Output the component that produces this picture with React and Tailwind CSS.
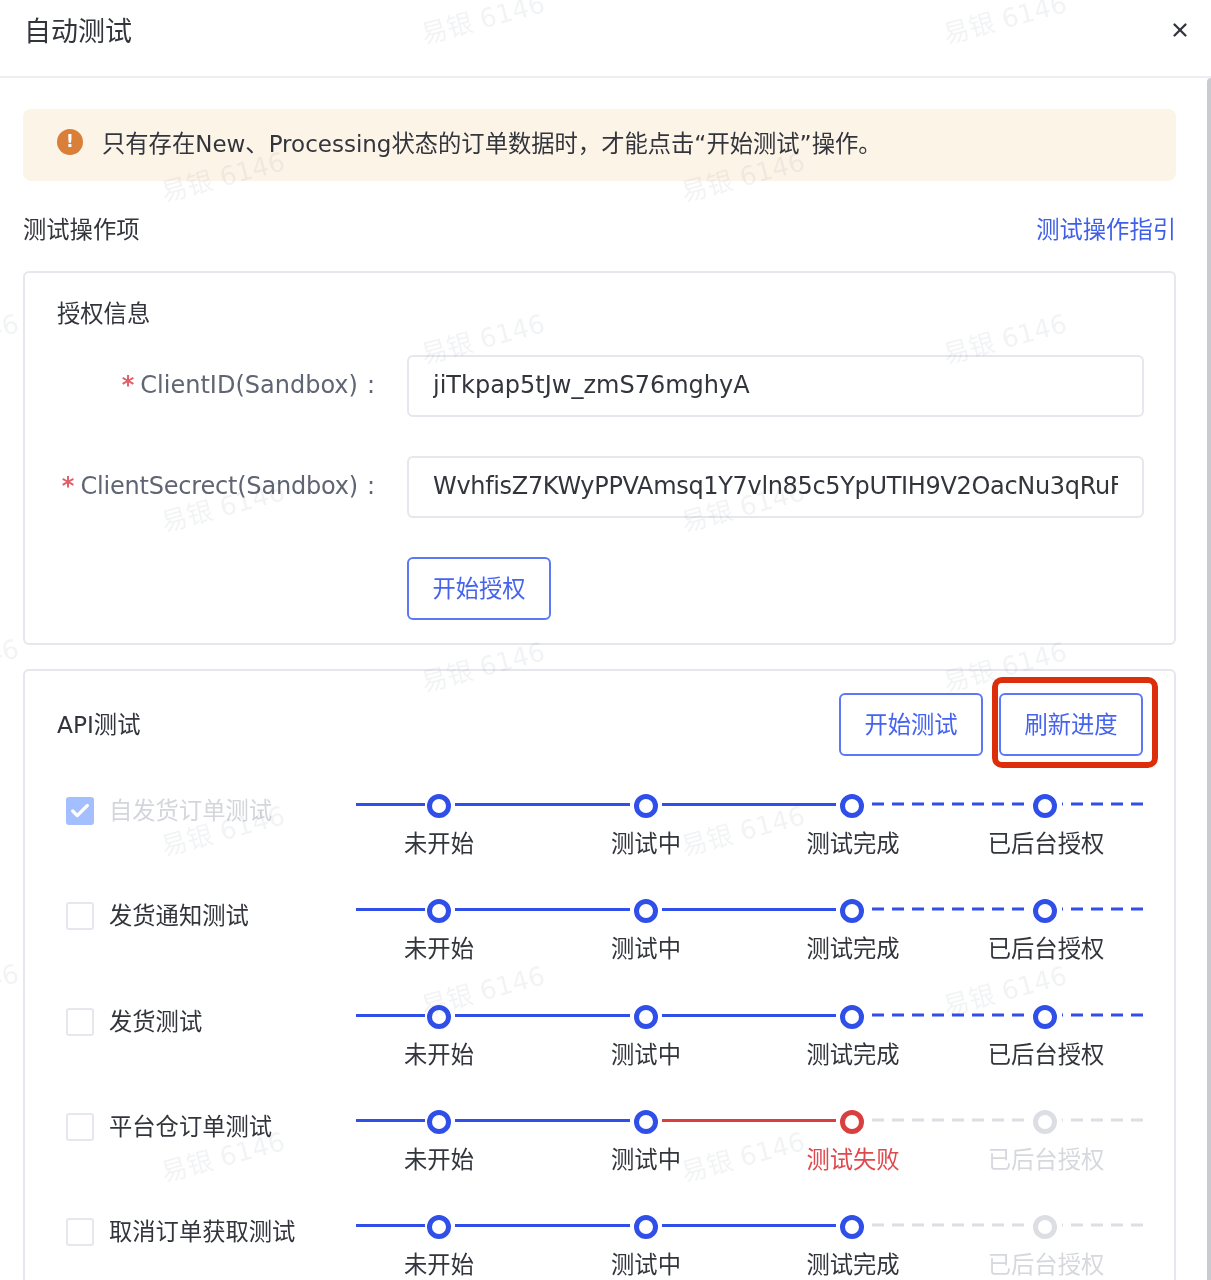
import { X, Check } from "lucide-react";

const font = { fontFamily: '"DejaVu Sans", "Noto Sans CJK SC", sans-serif' };

const watermarks = [
  [420, 0], [942, 0], [160, 158], [680, 158],
  [420, 320], [942, 320], [-106, 320], [160, 488], [680, 488], [-106, 645],
  [420, 648], [942, 648], [160, 812], [680, 812],
  [-106, 970], [420, 972], [942, 972], [160, 1138], [680, 1138],
];

const rows = [
  { name: "自发货订单测试", checked: true, status: "done", dash: "blue" },
  { name: "发货通知测试", status: "done", dash: "blue" },
  { name: "发货测试", status: "done", dash: "blue" },
  { name: "平台仓订单测试", status: "fail", dash: "gray" },
  { name: "取消订单获取测试", status: "done", dash: "gray" },
];

function Dot({ color }) {
  return <span className={`block w-[24px] h-[24px] rounded-full border-[5px] shrink-0 mt-[2px] ${color}`} />;
}

function Dash({ w, color, offset = 0 }) {
  return (
    <svg width={w} height="4" className="shrink-0 block">
      <line x1="0" y1="2" x2={w} y2="2" stroke={color} strokeWidth="3" strokeDasharray="12 8" strokeDashoffset={offset} />
    </svg>
  );
}

function Stepper({ status, dash }) {
  const fail = status === "fail";
  const grey = dash === "gray";
  const dashColor = grey ? "#dcdee3" : "#2f4fe8";
  return (
    <div className="w-[787px]">
      <div className="flex items-start h-[25px] [&>i]:mt-[11px] [&>i]:h-[3px] [&>i]:block">
        <i className="w-[69px] bg-[#2f4fe8]" />
        <span className="w-[2px]" />
        <Dot color="border-[#2f4fe8]" />
        <span className="w-[4px]" />
        <i className="w-[175px] bg-[#2f4fe8]" />
        <span className="w-[4px]" />
        <Dot color="border-[#2f4fe8]" />
        <span className="w-[4px]" />
        <i className={`w-[174px] ${fail ? "bg-[#d93f3f]" : "bg-[#2f4fe8]"}`} />
        <span className="w-[4px]" />
        <Dot color={fail ? "border-[#d93f3f]" : "border-[#2f4fe8]"} />
        <span className="w-[8px]" />
        <span className="mt-[10px]"><Dash w={153} color={dashColor} /></span>
        <span className="w-[8px]" />
        <Dot color={grey ? "border-[#dcdee3]" : "border-[#2f4fe8]"} />
        <span className="w-[5px]" />
        <span className="mt-[10px]"><Dash w={81} color={dashColor} offset={11} /></span>
      </div>
      <div className="flex text-[23.3px] leading-[32px] mt-[11px] text-[#33353d]">
        <span className="w-[100px] ml-[33px] text-center whitespace-nowrap">未开始</span>
        <span className="w-[100px] ml-[107px] text-center whitespace-nowrap">测试中</span>
        <span className={`w-[100px] ml-[107px] text-center whitespace-nowrap ${fail ? "text-[#e0484d]" : ""}`}>
          {fail ? "测试失败" : "测试完成"}
        </span>
        <span className={`w-[100px] ml-[93px] flex justify-center whitespace-nowrap ${grey ? "text-[#d6d8de]" : ""}`}>
          已后台授权
        </span>
      </div>
    </div>
  );
}

function TestRow({ name, checked, status, dash }) {
  return (
    <div className="flex items-start h-[105.3px]">
      <div className="w-[290px] flex items-center pl-[9px] h-[30px] mt-[-1px] shrink-0">
        {checked ? (
          <span className="w-[28px] h-[28px] rounded-[3px] bg-[#a3bfff] flex items-center justify-center">
            <Check size={22} strokeWidth={3.5} className="text-white" />
          </span>
        ) : (
          <span className="w-[28px] h-[28px] rounded-[3px] border-2 border-[#e6e7ec] bg-white" />
        )}
        <span className={`ml-[15px] text-[23.3px] leading-[30px] whitespace-nowrap ${checked ? "text-[#d4d6dc]" : "text-[#33353d]"}`}>{name}</span>
      </div>
      <div className="ml-[9px] mt-[-5px]">
        <Stepper status={status} dash={dash} />
      </div>
    </div>
  );
}

function Field({ label, value, tight }) {
  return (
    <div className="flex items-center h-[62px]">
      <div className="w-[350px] shrink-0 flex justify-end pr-[32px] mb-[2px] text-[24px] text-[#5f6573] whitespace-nowrap">
        <span className="text-[#e0606a] mr-[6px] font-bold">*</span>
        <span className={tight ? "tracking-[-0.2px]" : ""}>{label}</span>
        <span className="ml-[9px]">:</span>
      </div>
      <div className="w-[737px] h-[62px] border-2 border-[#e6e7ec] rounded-[6px] px-[24px] flex items-center text-[24px] text-[#33353d] whitespace-nowrap">
        <span className={`block overflow-hidden w-full mb-[2px] ${tight ? "tracking-[-0.33px]" : ""}`}>{value}</span>
      </div>
    </div>
  );
}

function OutlineBtn({ children }) {
  return (
    <button className="w-[144px] h-[63px] pt-[2px] border-2 border-[#5b79f4] rounded-[6px] bg-white text-[#4563ee] text-[23.3px]">
      {children}
    </button>
  );
}

export default function App() {
  return (
    <div style={font} className="relative w-[1211px] h-[1280px] overflow-hidden bg-white blur-[0.5px]">
      <div className="flex items-center justify-between h-[76px] pl-[24px] pr-[20px] pb-[12px]">
        <span className="text-[27px] text-[#33353d]">自动测试</span>
        <X size={22} strokeWidth={2.5} className="text-[#33353d] mt-[-4px]" />
      </div>
      <div className="h-[2px] bg-[#eeeef2]" />
      <div className="flex">
        <div className="w-[1207px] pl-[23px] pr-[31px] pt-[31px]">
          <div className="h-[72px] rounded-[8px] bg-[#fdf4e8] flex items-center pl-[34px] text-[#33353d] whitespace-nowrap">
            <span className="w-[26px] h-[26px] mb-[6px] rounded-full bg-[#d97f3a] text-white text-[17px] font-bold flex items-center justify-center shrink-0">!</span>
            <span className="ml-[19px] mb-[2px] text-[23.3px]">只有存在<span className="text-[23px]">New</span>、<span className="text-[23px]">Processing</span>状态的订单数据时，才能点击“开始测试”操作。</span>
          </div>

          <div className="flex justify-between items-center mt-[32px] h-[34px] text-[23.3px]">
            <span className="text-[#33353d]">测试操作项</span>
            <span className="text-[#3f5fe8]">测试操作指引</span>
          </div>

          <div className="mt-[24px] h-[374px] border-2 border-[#e6e7ec] rounded-[6px] pt-[25px] pl-[32px]">
            <div className="text-[23.3px] leading-[32px] text-[#33353d]">授权信息</div>
            <div className="mt-[25px]">
              <Field label="ClientID(Sandbox)" value="jiTkpap5tJw_zmS76mghyA" />
              <div className="mt-[39px]">
                <Field tight label="ClientSecrect(Sandbox)" value="WvhfisZ7KWyPPVAmsq1Y7vln85c5YpUTIH9V2OacNu3qRuFvKxT" />
              </div>
            </div>
            <div className="mt-[39px] ml-[350px]">
              <OutlineBtn>开始授权</OutlineBtn>
            </div>
          </div>

          <div className="mt-[24px] border-2 border-[#e6e7ec] rounded-[6px] pl-[32px] pr-[31px] pt-[22px] h-[700px]">
            <div className="flex items-center justify-between h-[63px]">
              <span className="pt-[2px] text-[23.3px] text-[#33353d]">API测试</span>
              <div className="flex gap-[16px]">
                <OutlineBtn>开始测试</OutlineBtn>
                <div className="relative">
                  <OutlineBtn>刷新进度</OutlineBtn>
                  <span className="absolute -left-[7px] -top-[16px] -right-[15px] -bottom-[12px] border-[6px] border-[#dc2e0b] rounded-[10px]" />
                </div>
              </div>
            </div>
            <div className="mt-[41px]">
              {rows.map((r) => (
                <TestRow key={r.name} {...r} />
              ))}
            </div>
          </div>
        </div>
        <div className="w-[4px] h-[1202px] bg-[#c9cbd3] rounded-tl-[4px]" />
      </div>

      <div className="absolute inset-0 pointer-events-none">
        {watermarks.map(([x, y]) => (
          <span
            key={`${x}-${y}`}
            className="absolute text-[26px] whitespace-nowrap text-[#1f3a4a]/[0.06] -rotate-[15deg]"
            style={{ left: x, top: y }}
          >
            易银 6146
          </span>
        ))}
      </div>
    </div>
  );
}
